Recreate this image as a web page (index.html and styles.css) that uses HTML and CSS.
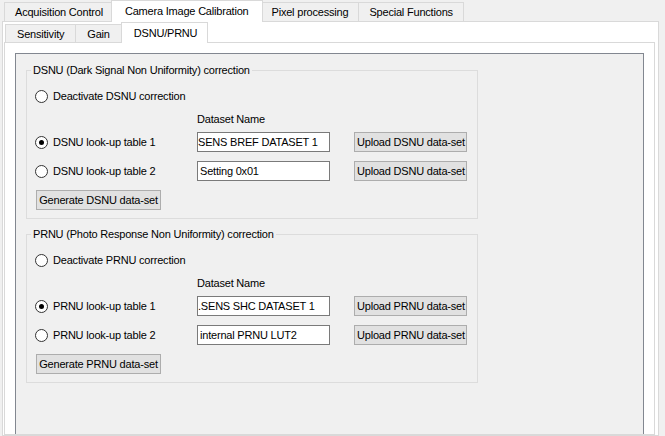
FILE: index.html
```html
<!DOCTYPE html>
<html lang="en">
<head>
    <meta charset="UTF-8">
    <title>Camera Image Calibration</title>
    <link rel="stylesheet" href="styles.css">
</head>
<body>
    <div class="window">
        <div class="tabbar outer">
            <div class="tab">Acquisition Control</div>
            <div class="tab active">Camera Image Calibration</div>
            <div class="tab">Pixel processing</div>
            <div class="tab">Special Functions</div>
        </div>

        <div class="pane outer-pane">
            <div class="tabbar inner">
                <div class="tab">Sensitivity</div>
                <div class="tab">Gain</div>
                <div class="tab active">DSNU/PRNU</div>
            </div>

            <div class="pane inner-pane">
                <div class="frame">
                    <fieldset class="group">
                        <legend>DSNU (Dark Signal Non Uniformity) correction</legend>
                        <label class="row first"><input type="radio" name="dsnu"> Deactivate DSNU correction</label>
                        <div class="dataset-head">Dataset Name</div>
                        <div class="row lut">
                            <label class="lut-label"><input type="radio" name="dsnu" checked> DSNU look-up table 1</label>
                            <input type="text" class="field scrolled" value="SENS BREF DATASET 1">
                            <button class="btn upload">Upload DSNU data-set</button>
                        </div>
                        <div class="row lut second">
                            <label class="lut-label"><input type="radio" name="dsnu"> DSNU look-up table 2</label>
                            <input type="text" class="field" value="Setting 0x01">
                            <button class="btn upload">Upload DSNU data-set</button>
                        </div>
                        <button class="btn generate">Generate DSNU data-set</button>
                    </fieldset>

                    <fieldset class="group">
                        <legend>PRNU (Photo Response Non Uniformity) correction</legend>
                        <label class="row first"><input type="radio" name="prnu"> Deactivate PRNU correction</label>
                        <div class="dataset-head">Dataset Name</div>
                        <div class="row lut">
                            <label class="lut-label"><input type="radio" name="prnu" checked> PRNU look-up table 1</label>
                            <input type="text" class="field scrolled" value=".SENS SHC DATASET 1">
                            <button class="btn upload">Upload PRNU data-set</button>
                        </div>
                        <div class="row lut second">
                            <label class="lut-label"><input type="radio" name="prnu"> PRNU look-up table 2</label>
                            <input type="text" class="field" value="internal PRNU LUT2">
                            <button class="btn upload">Upload PRNU data-set</button>
                        </div>
                        <button class="btn generate">Generate PRNU data-set</button>
                    </fieldset>
                </div>
            </div>
        </div>
    </div>
</body>
</html>
```

FILE: styles.css
```css
* {
    margin: 0;
    padding: 0;
    box-sizing: border-box;
}

html, body {
    height: 436px;
    overflow: hidden;
}

body {
    font-family: 'Liberation Sans', Arial, sans-serif;
    font-size: 11px;
    letter-spacing: -0.2px;
    color: #000;
    background: #f0f0f0;
}

.window {
    height: 100%;
    display: flex;
    flex-direction: column;
    padding-left: 2px;
}

/* tab bars */
.tabbar {
    display: flex;
    align-items: flex-end;
}

.tabbar.outer {
    padding-left: 2px;
}

.tabbar.inner {
    padding-left: 2px;
}

.tab {
    height: 19px;
    padding: 0 10px;
    margin-right: -1px;
    display: flex;
    align-items: center;
    background: #f0f0f0;
    border: 1px solid #d9d9d9;
    border-bottom: none;
    white-space: nowrap;
}

.tabbar.inner .tab {
    height: 18px;
    padding: 0 11px;
}

.tab.active {
    height: 22px;
    margin: 0 -2px -1px -2px;
    padding: 0 13px 1px;
    background: #fff;
    position: relative;
    z-index: 1;
}

.tabbar.inner .tab.active {
    height: 21px;
    margin-left: 0;
    padding: 0 10px 1px 12px;
}

/* panes */
.pane {
    background: #fff;
    border: 1px solid #d9d9d9;
}

.outer-pane {
    flex: 1;
    width: 657px;
    display: flex;
    flex-direction: column;
}

.inner-pane {
    flex: 1;
    margin: 0 3px 0 1px;
    padding: 10px 10px 0;
    display: flex;
    flex-direction: column;
}

.frame {
    flex: 1;
    background: #f0f0f0;
    border: 1px solid #828790;
    border-bottom: none;
    padding-left: 10px;
}

/* group boxes */
.group {
    width: 452px;
    margin-top: 9px;
    padding: 8px 8px 8px 8px;
    border: 1px solid #dcdcdc;
}

.group + .group {
    margin-top: 8px;
}

.group legend {
    margin-left: -4px;
    padding: 0 2px;
    line-height: 15px;
}

.row {
    height: 20px;
    display: flex;
    align-items: center;
}

.row.first {
    width: max-content;
}

.lut {
    margin-top: 3px;
}

.lut.second {
    margin-top: 9px;
}

.lut-label {
    width: 162px;
    display: flex;
    align-items: center;
}

.dataset-head {
    height: 20px;
    margin: 3px 0 0 162px;
    display: flex;
    align-items: center;
}

/* radio buttons */
input[type="radio"] {
    appearance: none;
    -webkit-appearance: none;
    width: 13px;
    height: 13px;
    margin-right: 5px;
    border: 1px solid #333;
    border-radius: 50%;
    background: #fff;
    display: inline-flex;
    align-items: center;
    justify-content: center;
    flex-shrink: 0;
}

input[type="radio"]:checked::after {
    content: "";
    width: 5px;
    height: 5px;
    border-radius: 50%;
    background: #000;
}

/* text fields */
.field {
    width: 133px;
    height: 20px;
    padding: 0 2px;
    border: 1px solid #7a7a7a;
    background: #fff;
    font: inherit;
    letter-spacing: inherit;
    color: #000;
    outline: none;
}

.field.scrolled {
    padding-left: 0;
}

/* buttons */
.btn {
    height: 20px;
    padding: 0 2px;
    background: #e1e1e1;
    border: 1px solid #adadad;
    font: inherit;
    letter-spacing: inherit;
    color: #000;
    white-space: nowrap;
}

.upload {
    width: 113px;
    margin-left: 24px;
}

.generate {
    width: 125px;
    margin: 9px 0 0 1px;
    display: block;
}
```
